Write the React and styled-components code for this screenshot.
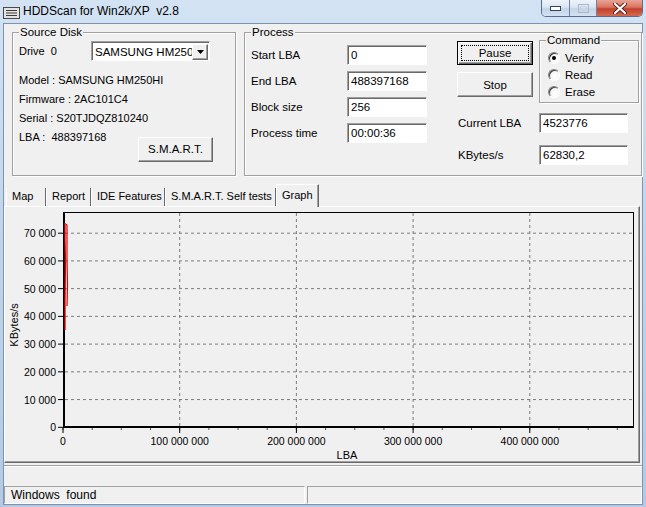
import styled, { createGlobalStyle } from "styled-components"

const GlobalStyle = createGlobalStyle`
    html, body {
        margin: 0;
        padding: 0;
    }

    body {
        background: #fff;
        font-family: "Liberation Sans", Arial, sans-serif;
        font-size: 11px;
        color: #000;
    }

    * {
        box-sizing: border-box;
    }
`

const Window = styled.div`
    width: 646px;
    height: 507px;
    display: flex;
    flex-direction: column;
    padding: 0 3px 2px 3px;
    background: linear-gradient(180deg, #d3e3f4 0%, #bfd5ec 45%, #b2cae5 100%);
`

const TitleBar = styled.div`
    height: 23px;
    display: flex;
    align-items: flex-start;
`

const AppIcon = styled.svg`
    margin-top: 7px;
    flex-shrink: 0;
`

const Title = styled.div`
    margin: 4px 0 0 3px;
    font-size: 12px;
    line-height: 14px;
    white-space: pre;
`

const Caption = styled.div`
    margin-left: auto;
    display: flex;
    height: 17px;
    border: 1px solid #5a6e8c;
    border-top: none;
    border-radius: 0 0 5px 5px;
    overflow: hidden;
`

const CaptionButton = styled.div`
    width: ${p => p.$w}px;
    display: flex;
    align-items: center;
    justify-content: center;
    border-left: ${p => (p.$first ? "none" : "1px solid #6f83a0")};
    background: ${p =>
        p.$close
            ? "linear-gradient(180deg, #e8a597 0%, #d9735f 45%, #c2412c 55%, #d46a4f 100%)"
            : "linear-gradient(180deg, #eef3fa 0%, #dbe5f1 45%, #c3d3e7 55%, #d4e2f2 100%)"};
`

const Client = styled.div`
    flex: 1;
    display: flex;
    flex-direction: column;
    background: #f0f0f0;
    border: 1px solid #7f93ad;
`

const TopRow = styled.div`
    height: 160px;
    display: flex;
    align-items: flex-start;
    padding: 2px 0 0 8px;
`

const Group = styled.fieldset`
    margin: 0 0 0 ${p => p.$ml || 0}px;
    padding: 0;
    min-width: 0;
    width: ${p => p.$w}px;
    height: ${p => p.$h}px;
    border: 1px solid #a0a0a0;
    box-shadow: inset 1px 1px 0 #fff, 1px 1px 0 #fff;
`

const Legend = styled.legend`
    margin-left: 6px;
    padding: 0 1px;
    font-size: 11.5px;
    line-height: ${p => p.$lh || 12}px;
    background: #f0f0f0;
`

const DriveRow = styled.div`
    margin-top: 3px;
    height: 20px;
    display: flex;
    align-items: center;
    padding-left: 6px;
`

const DriveLabel = styled.span`
    width: 72px;
    white-space: pre;
`

const Combo = styled.div`
    width: 119px;
    height: 20px;
    display: flex;
    align-items: center;
    background: #fff;
    border: 1px solid;
    border-color: #a0a0a0 #fff #fff #a0a0a0;
    box-shadow: inset 1px 1px 0 #696969;
    padding: 1px 1px 0 3px;
    font-size: 11.5px;
`

const ComboText = styled.span`
    flex: 1;
    overflow: hidden;
    white-space: nowrap;
`

const ComboArrow = styled.div`
    width: 16px;
    height: 16px;
    flex-shrink: 0;
    display: flex;
    align-items: center;
    justify-content: center;
    background: #f0f0f0;
    border: 1px solid;
    border-color: #fff #696969 #696969 #fff;
    box-shadow: inset -1px -1px 0 #a0a0a0;
`

const Info = styled.div`
    margin-top: 10px;
    padding-left: 6px;
    line-height: 19px;
    white-space: pre;
`

const InfoLast = styled.div`
    display: flex;
    align-items: flex-start;
`

const Button = styled.div`
    width: ${p => p.$w}px;
    height: ${p => p.$h}px;
    margin: ${p => p.$m || "0"};
    display: flex;
    align-items: center;
    justify-content: center;
    font-size: 11.5px;
    background: #f0f0f0;
    position: relative;
    border: 1px solid;
    border-color: ${p => (p.$default ? "#000" : "#fff #696969 #696969 #fff")};
    box-shadow: ${p =>
        p.$default
            ? "inset 1px 1px 0 #fff, inset -1px -1px 0 #696969, inset -2px -2px 0 #a0a0a0"
            : "inset -1px -1px 0 #a0a0a0"};

    &::after {
        content: "";
        display: ${p => (p.$default ? "block" : "none")};
        position: absolute;
        inset: 3px;
        border: 1px dotted #000;
    }
`

const ProcessBody = styled.div`
    display: flex;
    align-items: flex-start;
`

const Fields = styled.div`
    margin: 7px 0 0 6px;
    display: grid;
    grid-template-columns: 96px 80px;
    grid-auto-rows: 20px;
    row-gap: 6px;
    align-items: center;
`

const Field = styled.div`
    width: ${p => p.$w || 80}px;
    height: 20px;
    background: #fff;
    border: 1px solid;
    border-color: #a0a0a0 #fff #fff #a0a0a0;
    box-shadow: inset 1px 1px 0 #696969;
    padding: 0 0 0 3px;
    line-height: 18px;
    font-size: 11.5px;
`

const RightPane = styled.div`
    margin: -3px 0 0 30px;
    display: flex;
    flex-direction: column;
`

const PaneTop = styled.div`
    display: flex;
    align-items: flex-start;
`

const ButtonCol = styled.div`
    margin-top: 6px;
    display: flex;
    flex-direction: column;
    gap: 7px;
`

const RadioList = styled.div`
    margin-top: 4px;
    padding-left: 8px;
    display: flex;
    flex-direction: column;
`

const RadioRow = styled.div`
    height: 17px;
    display: flex;
    align-items: center;
    gap: 5px;
    font-size: 11.5px;
`

const RadioDot = styled.span`
    width: 12px;
    height: 12px;
    border-radius: 50%;
    position: relative;
    background: radial-gradient(circle at 60% 60%, #ffffff 0%, #f4f4f4 60%, #e2e2e2 100%);
    border: 1px solid;
    border-color: #808080 #fff #fff #808080;
    box-shadow: inset 1px 1px 0 #404040;

    &::after {
        content: "";
        display: ${p => (p.$on ? "block" : "none")};
        position: absolute;
        left: 3px;
        top: 3px;
        width: 4px;
        height: 4px;
        border-radius: 50%;
        background: #000;
    }
`

const Stats = styled.div`
    margin-top: 10px;
    padding-left: 1px;
    display: grid;
    grid-template-columns: 81px 89px;
    grid-auto-rows: 20px;
    row-gap: 12px;
    align-items: center;
    font-size: 11.5px;
`

const Label = styled.span`
    font-size: 11.5px;
`

const TabStrip = styled.div`
    height: 22px;
    display: flex;
    align-items: flex-end;
    padding-left: 2px;
`

const Tab = styled.div`
    width: ${p => p.$w}px;
    height: ${p => (p.$active ? 23 : 18)}px;
    margin-bottom: ${p => (p.$active ? -1 : 0)}px;
    padding-left: 5px;
    font-size: 11px;
    white-space: nowrap;
    line-height: ${p => (p.$active ? 20 : 17)}px;
    background: #f0f0f0;
    position: relative;
    z-index: ${p => (p.$active ? 1 : 0)};
    border-left: 1px solid #fff;
    border-right: 1px solid #696969;
    border-top: ${p => (p.$active ? "1px solid #fff" : "none")};
    box-shadow: ${p => (p.$active ? "inset -1px 0 0 #a0a0a0" : "none")};
`

const Panel = styled.div`
    height: 257px;
    margin-right: 2px;
    border: 1px solid;
    border-color: #fff #696969 #696969 #fff;
    box-shadow: inset -1px -1px 0 #a0a0a0;
`

const ChartSvg = styled.svg`
    display: block;
    font-family: "Liberation Sans", Arial, sans-serif;
`

const BottomGap = styled.div`
    margin-top: 2px;
    height: 21px;
    border-top: 1px solid #a0a0a0;
    box-shadow: inset 0 1px 0 #fff;
`

const StatusBar = styled.div`
    height: 18px;
    display: flex;
    gap: 2px;
`

const StatusPanel = styled.div`
    width: ${p => (p.$w ? `${p.$w}px` : "auto")};
    flex: ${p => (p.$w ? "none" : 1)};
    border: 1px solid;
    border-color: #a0a0a0 #fff #fff #a0a0a0;
    padding-left: 6px;
    font-size: 12px;
    line-height: 16px;
    white-space: pre;
`

const yOf = v => 427.3 - (v / 10000) * 27.73
const xOf = v => 63 + (v / 1e8) * 116.7
const fmt = v => String(v).replace(/\B(?=(\d{3})+(?!\d))/g, " ")

const yValues = [0, 10000, 20000, 30000, 40000, 50000, 60000, 70000]
const xValues = [0, 1e8, 2e8, 3e8, 4e8]
const minorX = Array.from({ length: 20 }, (_, i) => 63 + i * 29.175)

function Chart() {
    return (
        <ChartSvg width="634" height="255" viewBox="5 207 634 255">
            {yValues.slice(1).map(v => (
                <line key={v} x1="65" x2="632" y1={yOf(v)} y2={yOf(v)} stroke="#7a7a7a" strokeDasharray="3 3" />
            ))}
            {xValues.slice(1).map(v => (
                <line key={v} x1={xOf(v)} x2={xOf(v)} y1="213" y2="426" stroke="#7a7a7a" strokeDasharray="3 3" />
            ))}
            <rect x="63.5" y="212.5" width="570" height="215" fill="none" stroke="#000" />
            <line x1="64" x2="64" y1="212" y2="428" stroke="#000" strokeWidth="2" />
            <line x1="63" x2="634" y1="427" y2="427" stroke="#000" strokeWidth="2" />
            {yValues.map(v => (
                <g key={v}>
                    <line x1="58" x2="63" y1={yOf(v)} y2={yOf(v)} stroke="#000" />
                    <text x="56" y={yOf(v) + 4} fontSize="10.5" textAnchor="end">{fmt(v)}</text>
                </g>
            ))}
            {minorX.map(x => (
                <line key={x} x1={x} x2={x} y1="428" y2="430" stroke="#555" />
            ))}
            {xValues.map(v => (
                <g key={v}>
                    <line x1={xOf(v)} x2={xOf(v)} y1="428" y2="433" stroke="#000" />
                    <text x={xOf(v)} y="445" fontSize="10.5" textAnchor="middle">{fmt(v)}</text>
                </g>
            ))}
            <text transform="translate(18,325) rotate(-90)" fontSize="11" textAnchor="middle">KBytes/s</text>
            <text x="347" y="459" fontSize="11" textAnchor="middle">LBA</text>
            <polyline points="65,223 65,240 65.5,262 65,300 65,330" fill="none" stroke="#e00000" strokeWidth="1.3" />
            <polyline points="66.5,224 67,226 67,260 67.5,285 67,306" fill="none" stroke="#e00000" strokeWidth="1.2" />
        </ChartSvg>
    )
}

export default function App() {
    return (
        <>
            <GlobalStyle />
            <Window>
                <TitleBar>
                    <AppIcon width="17" height="12" viewBox="0 0 17 12">
                        <rect x="0.5" y="0.5" width="16" height="11" fill="#e4e4e4" stroke="#4a4a4a" />
                        <line x1="3" x2="14" y1="3.5" y2="3.5" stroke="#3a3a3a" />
                        <line x1="3" x2="14" y1="6" y2="6" stroke="#3a3a3a" />
                        <line x1="3" x2="14" y1="8.5" y2="8.5" stroke="#3a3a3a" />
                    </AppIcon>
                    <Title>HDDScan for Win2k/XP  v2.8</Title>
                    <Caption>
                        <CaptionButton $w={27} $first>
                            <svg width="11" height="5" viewBox="0 0 11 5">
                                <rect x="0.5" y="0.5" width="10" height="4" fill="#fff" stroke="#34465e" />
                            </svg>
                        </CaptionButton>
                        <CaptionButton $w={27}>
                            <svg width="11" height="9" viewBox="0 0 11 9">
                                <rect x="0.5" y="0.5" width="10" height="8" fill="none" stroke="#a9b8cb" />
                                <rect x="2.5" y="2.5" width="6" height="4" fill="none" stroke="#c6d2e0" />
                            </svg>
                        </CaptionButton>
                        <CaptionButton $w={46} $close>
                            <svg width="14" height="11" viewBox="0 0 14 11">
                                <path d="M2 1 L12 10 M12 1 L2 10" stroke="#5b1e16" strokeWidth="4" strokeLinecap="round" />
                                <path d="M2 1 L12 10 M12 1 L2 10" stroke="#fff" strokeWidth="2.2" strokeLinecap="round" />
                            </svg>
                        </CaptionButton>
                    </Caption>
                </TitleBar>
                <Client>
                    <TopRow>
                        <Group $w={224} $h={150}>
                            <Legend>Source Disk</Legend>
                            <DriveRow>
                                <DriveLabel>Drive  0</DriveLabel>
                                <Combo>
                                    <ComboText>SAMSUNG HM250HI</ComboText>
                                    <ComboArrow>
                                        <svg width="7" height="4" viewBox="0 0 7 4">
                                            <path d="M0 0 H7 L3.5 4 Z" fill="#000" />
                                        </svg>
                                    </ComboArrow>
                                </Combo>
                            </DriveRow>
                            <Info>
                                <div>Model : SAMSUNG HM250HI</div>
                                <div>Firmware : 2AC101C4</div>
                                <div>Serial : S20TJDQZ810240</div>
                                <InfoLast>
                                    <span>LBA :  488397168</span>
                                    <Button $w={75} $h={25} $m="9px 22px 0 auto">S.M.A.R.T.</Button>
                                </InfoLast>
                            </Info>
                        </Group>
                        <Group $w={398} $h={150} $ml={8}>
                            <Legend>Process</Legend>
                            <ProcessBody>
                                <Fields>
                                    <Label>Start LBA</Label>
                                    <Field>0</Field>
                                    <Label>End LBA</Label>
                                    <Field>488397168</Field>
                                    <Label>Block size</Label>
                                    <Field>256</Field>
                                    <Label>Process time</Label>
                                    <Field>00:00:36</Field>
                                </Fields>
                                <RightPane>
                                    <PaneTop>
                                        <ButtonCol>
                                            <Button $w={76} $h={24} $default>Pause</Button>
                                            <Button $w={76} $h={25}>Stop</Button>
                                        </ButtonCol>
                                        <Group $w={100} $h={68} $ml={6}>
                                            <Legend $lh={10}>Command</Legend>
                                            <RadioList>
                                                <RadioRow><RadioDot $on />Verify</RadioRow>
                                                <RadioRow><RadioDot />Read</RadioRow>
                                                <RadioRow><RadioDot />Erase</RadioRow>
                                            </RadioList>
                                        </Group>
                                    </PaneTop>
                                    <Stats>
                                        <span>Current LBA</span>
                                        <Field $w={89}>4523776</Field>
                                        <span>KBytes/s</span>
                                        <Field $w={89}>62830,2</Field>
                                    </Stats>
                                </RightPane>
                            </ProcessBody>
                        </Group>
                    </TopRow>
                    <TabStrip>
                        <Tab $w={40}>Map</Tab>
                        <Tab $w={45}>Report</Tab>
                        <Tab $w={74}>IDE Features</Tab>
                        <Tab $w={111}>S.M.A.R.T. Self tests</Tab>
                        <Tab $w={43} $active>Graph</Tab>
                    </TabStrip>
                    <Panel>
                        <Chart />
                    </Panel>
                    <BottomGap />
                    <StatusBar>
                        <StatusPanel $w={301}>Windows  found</StatusPanel>
                        <StatusPanel />
                    </StatusBar>
                </Client>
            </Window>
        </>
    )
}
